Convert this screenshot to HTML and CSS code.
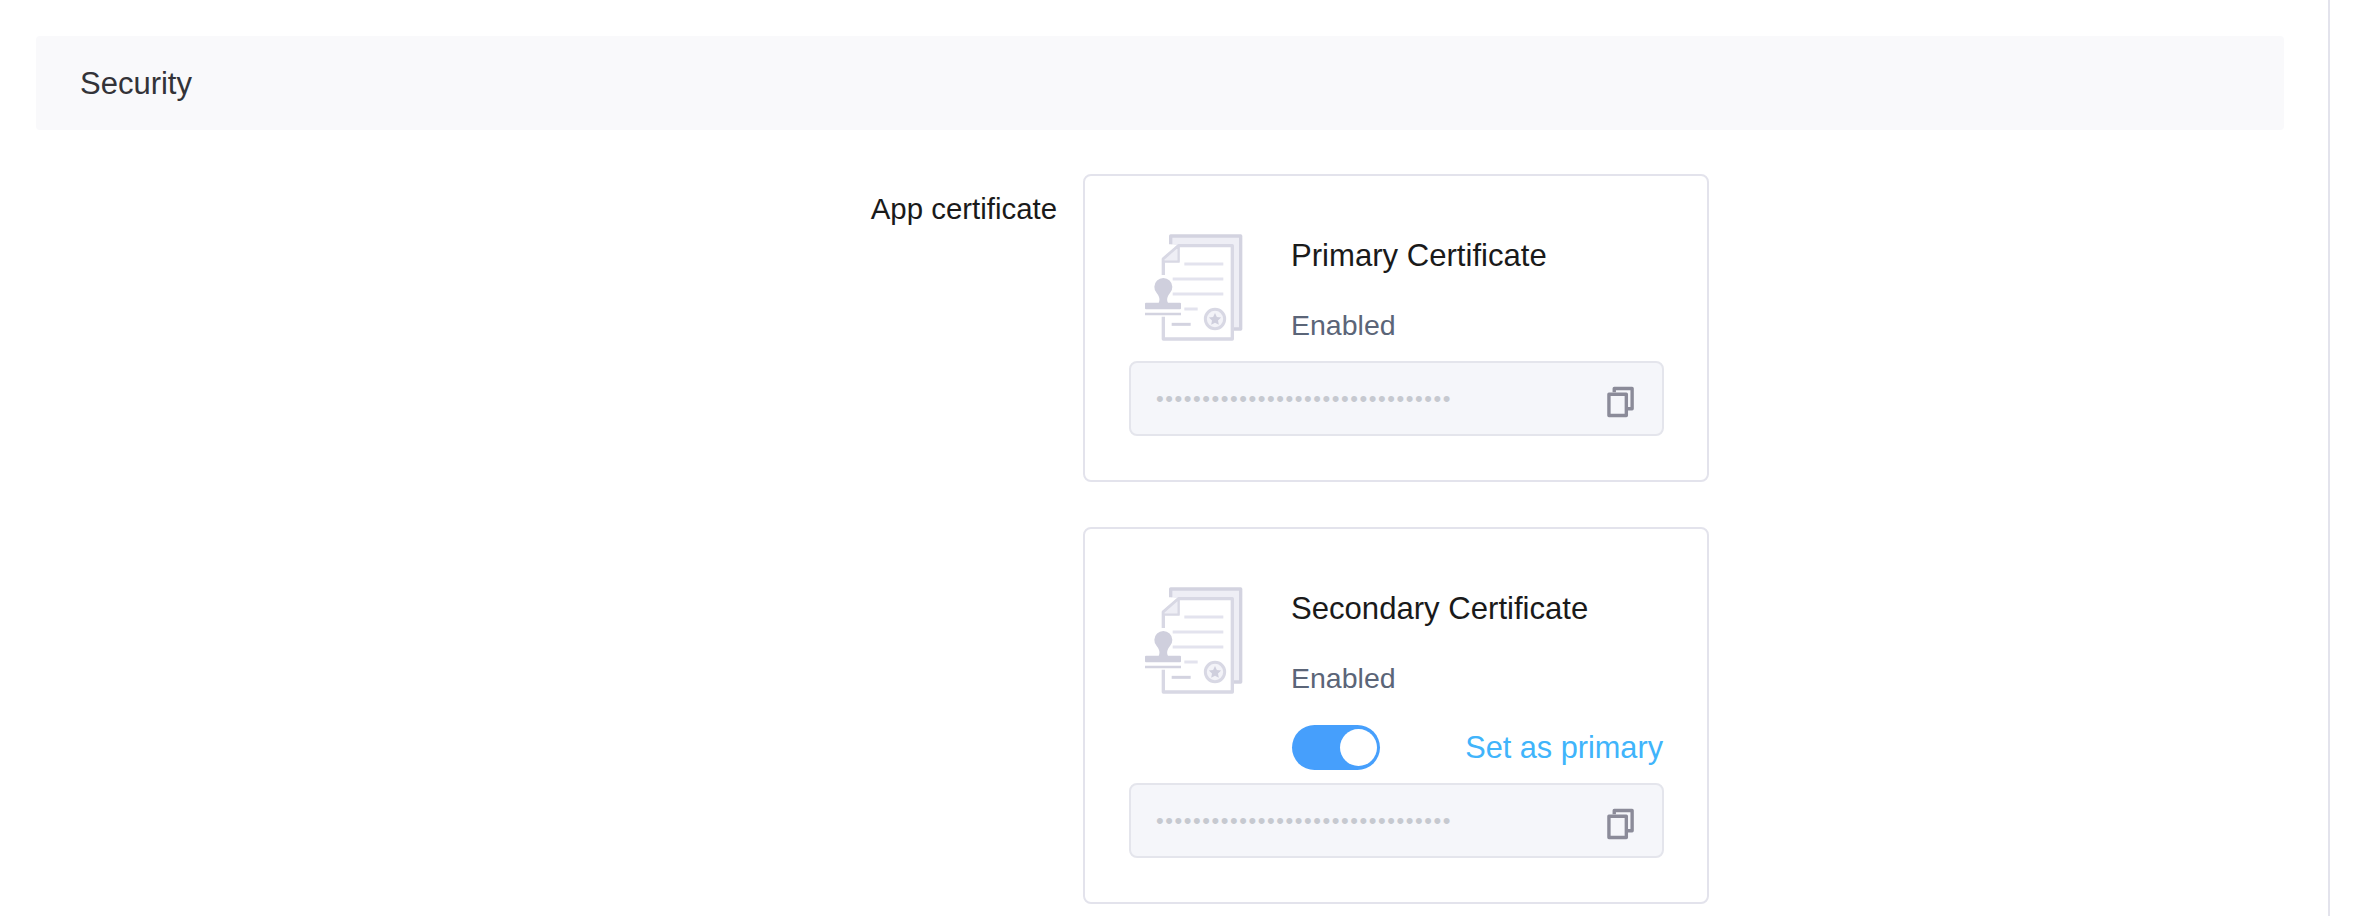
FILE: index.html
```html
<!DOCTYPE html>
<html lang="en">
<head>
<meta charset="utf-8">
<title>Security</title>
<link rel="stylesheet" href="styles.css">
</head>
<body>
<svg class="defs" width="0" height="0" aria-hidden="true">
  <symbol id="cert" viewBox="0 0 390 375">
    <path d="M122 58V33H332V312H310V62H150Z" fill="#eeeef5"/>
    <path d="M122 58V33H332V312H310" fill="none" stroke="#d3d3e0" stroke-width="10" stroke-linejoin="round"/>
    <path d="M100 150V102L146 62H307V342H100V275" fill="#fff" stroke="#d8d8e4" stroke-width="10" stroke-linejoin="round"/>
    <path d="M100 102L146 62V110H100Z" fill="#eeeef5" stroke="#d8d8e4" stroke-width="7" stroke-linejoin="round"/>
    <path d="M163 117H280M128 162H280M128 207H280M163 252H203" stroke="#e3e3ee" stroke-width="9" fill="none"/>
    <path d="M125 298H182" stroke="#d3d3e0" stroke-width="9" fill="none"/>
    <path d="M86 234C92 222 86 212 80 204A27 27 0 1 1 120 204C114 212 108 222 114 234Z" fill="#cfcfdd"/>
    <rect x="45" y="233" width="108" height="20" rx="3" fill="#cfcfdd"/>
    <path d="M45 267H153" stroke="#d3d3e0" stroke-width="7" fill="none"/>
    <circle cx="255" cy="282" r="29" fill="#f3f3f8" stroke="#d8d8e4" stroke-width="9"/>
    <path d="M255 264l5.500 12 13 1.500-9.500 9 2.500 13-11.500-6.500-11.500 6.500 2.500-13-9.500-9 13-1.500z" fill="#cfcfdd"/>
  </symbol>
  <symbol id="copy" viewBox="0 0 30 32">
    <path d="M7.500 6V2H26V23H21" fill="none" stroke="#8b8b99" stroke-width="3.500" stroke-linejoin="round"/>
    <rect x="2" y="8" width="18" height="22" fill="none" stroke="#8b8b99" stroke-width="3.500" stroke-linejoin="round"/>
  </symbol>
</svg>
<main class="main">
  <header class="section-head">Security</header>
  <div class="row">
    <div class="label">App certificate</div>
    <div class="cards">
      <section class="card">
        <div class="card-head">
          <svg class="cert-icon"><use href="#cert"/></svg>
          <div class="card-text">
            <div class="card-title">Primary Certificate</div>
            <div class="card-status">Enabled</div>
          </div>
        </div>
        <div class="secret">
          <span class="dots">••••••••••••••••••••••••••••••••</span>
          <svg class="copy-icon"><use href="#copy"/></svg>
        </div>
      </section>
      <section class="card">
        <div class="card-head">
          <svg class="cert-icon"><use href="#cert"/></svg>
          <div class="card-text">
            <div class="card-title">Secondary Certificate</div>
            <div class="card-status">Enabled</div>
          </div>
        </div>
        <div class="switch-row">
          <span class="toggle"><span class="knob"></span></span>
          <a class="link">Set as primary</a>
        </div>
        <div class="secret secret-tight">
          <span class="dots">••••••••••••••••••••••••••••••••</span>
          <svg class="copy-icon"><use href="#copy"/></svg>
        </div>
      </section>
    </div>
  </div>
</main>
</body>
</html>
```
FILE: styles.css
```css
* { box-sizing: border-box; }
html, body { margin: 0; height: 100%; overflow: hidden; background: #fff; }
body { font-family: "Liberation Sans", Arial, sans-serif; color: #111; }
.defs { display: block; height: 0; }
.main {
  width: 2330px;
  height: 916px;
  border-right: 2px solid #e3e3ec;
  padding: 36px 0 0 36px;
}
.section-head {
  width: 2248px;
  height: 94px;
  background: #f9f9fb;
  border-radius: 4px;
  padding-left: 44px;
  font-size: 31px;
  line-height: 96px;
  color: #333338;
}
.row { display: flex; margin-top: 44px; }
.label {
  width: 1021px;
  padding-top: 18px;
  text-align: right;
  font-size: 29.400px;
  line-height: 34px;
  color: #1a1a1a;
}
.cards { margin-left: 26px; display: flex; flex-direction: column; gap: 45px; }
.card {
  width: 626px;
  border: 2px solid #e3e3ec;
  border-radius: 8px;
  padding: 49px 44px 44px;
}
.card-head { display: flex; height: 125px; }
.cert-icon { width: 130px; height: 125px; flex: none; margin-left: 1px; }
.card-text { margin-left: 31px; }
.card-title { margin-top: 10px; font-size: 31.100px; line-height: 42px; color: #1a1a1a; }
.card-status { margin-top: 27px; font-size: 28.500px; line-height: 42px; color: #5b6578; }
.switch-row {
  display: flex;
  justify-content: space-between;
  align-items: center;
  height: 45px;
  margin-top: 22px;
  padding-left: 163px;
}
.toggle {
  display: flex;
  justify-content: flex-end;
  align-items: center;
  width: 88px;
  height: 45px;
  padding-right: 3px;
  border-radius: 23px;
  background: #469ffc;
}
.knob { width: 37px; height: 37px; border-radius: 50%; background: #fff; }
.link { font-size: 30.700px; line-height: 48px; color: #40b4fb; }
.secret {
  display: flex;
  justify-content: space-between;
  align-items: center;
  width: 535px;
  height: 75px;
  margin-top: 11px;
  padding: 0 26px 0 25px;
  background: #f5f6fa;
  border: 2px solid #e4e5ec;
  border-radius: 8px;
}
.secret-tight { margin-top: 13px; }
.dots { font-size: 22px; letter-spacing: 1.550px; color: #c6c9d0; line-height: 1; }
.copy-icon { width: 29px; height: 32px; flex: none; margin-top: 6px; }
```
